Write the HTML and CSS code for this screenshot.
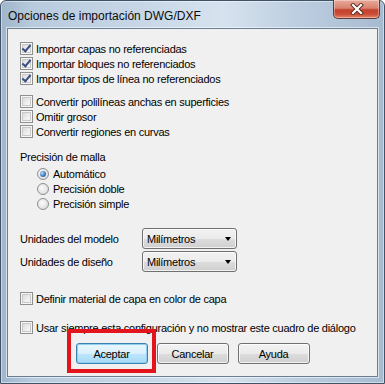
FILE: index.html
```html
<!DOCTYPE html>
<html>
<head>
  <meta charset="UTF-8">
  <title>Opciones de importación DWG/DXF</title>
  <link rel="stylesheet" href="styles.css">
</head>
<body>
  <div class="window">
    <div class="titlebar">
      <span class="title">Opciones de importación DWG/DXF</span>
      <div class="close">
        <svg width="14" height="12" viewBox="0 0 14 12">
          <path d="M3 2 L11 10 M11 2 L3 10" stroke="#5a2a22" stroke-width="4" stroke-linecap="square"/>
          <path d="M3 2 L11 10 M11 2 L3 10" stroke="#ffffff" stroke-width="2.2" stroke-linecap="square"/>
        </svg>
      </div>
    </div>

    <div class="content">
      <div class="group">
        <label class="row"><span class="box checked"></span>Importar capas no referenciadas</label>
        <label class="row"><span class="box checked"></span>Importar bloques no referenciados</label>
        <label class="row"><span class="box checked"></span>Importar tipos de línea no referenciados</label>
      </div>

      <div class="group group-2">
        <label class="row"><span class="box"></span>Convertir polilíneas anchas en superficies</label>
        <label class="row"><span class="box"></span>Omitir grosor</label>
        <label class="row"><span class="box"></span>Convertir regiones en curvas</label>
      </div>

      <div class="row caption">Precisión de malla</div>
      <div class="group radios">
        <label class="row"><span class="radio selected"></span>Automático</label>
        <label class="row"><span class="radio"></span>Precisión doble</label>
        <label class="row"><span class="radio"></span>Precisión simple</label>
      </div>

      <div class="units">
        <div class="unit-row">
          <span class="unit-label">Unidades del modelo</span>
          <div class="select">Milímetros<span class="arrow"></span></div>
        </div>
        <div class="unit-row">
          <span class="unit-label">Unidades de diseño</span>
          <div class="select">Milímetros<span class="arrow"></span></div>
        </div>
      </div>

      <label class="row single"><span class="box"></span>Definir material de capa en color de capa</label>
      <label class="row always"><span class="box"></span>Usar siempre esta configuración y no mostrar este cuadro de diálogo</label>

      <div class="buttons">
        <div class="highlight-wrap">
          <div class="btn default">Aceptar</div>
          <div class="highlight"></div>
        </div>
        <div class="btn">Cancelar</div>
        <div class="btn">Ayuda</div>
      </div>
    </div>
  </div>
</body>
</html>
```

FILE: styles.css
```css
* {
  box-sizing: border-box;
}

body {
  margin: 0;
  font-family: "Liberation Sans", Arial, sans-serif;
  font-size: 11px;
  color: #000;
  background: #fff;
}

.window {
  width: 385px;
  height: 384px;
  border: 1px solid #3f5266;
  border-radius: 6px 6px 0 0;
  background: linear-gradient(90deg, #9fb5cb 0%, #b8cbde 8%, #c6d6e6 35%, #d6e2ee 58%, #bccde0 78%, #a7bbd0 100%);
  box-shadow: inset 0 0 0 1px rgba(255, 255, 255, 0.45);
  display: flex;
  flex-direction: column;
}

.titlebar {
  height: 27px;
  display: flex;
  justify-content: space-between;
  align-items: flex-start;
  padding-left: 7px;
}

.title {
  font-size: 12px;
  padding-top: 8px;
  color: #0c0c0c;
}

.close {
  width: 47px;
  height: 19px;
  margin-top: -1px;
  margin-right: 4px;
  border: 1px solid #5f3a37;
  border-top: none;
  border-radius: 0 0 5px 5px;
  background: linear-gradient(180deg, #e9a99a 0%, #d9836f 45%, #c2402d 55%, #cc4f38 80%, #e4866a 100%);
  box-shadow: inset 0 0 0 1px rgba(255, 255, 255, 0.35);
  display: flex;
  align-items: center;
  justify-content: center;
}

.content {
  flex: 1;
  margin: 0 6px 6px;
  border: 1px solid #6b7f94;
  box-shadow: 0 0 0 1px rgba(255, 255, 255, 0.55);
  background: #f0f0f0;
  padding: 12px 0 0 12px;
  letter-spacing: -0.25px;
  display: flex;
  flex-direction: column;
}

.row {
  display: flex;
  align-items: center;
  height: 15px;
  white-space: nowrap;
}

.group-2 {
  margin-top: 8px;
}

.caption {
  margin-top: 10px;
}

.radios {
  margin-top: 2px;
  margin-left: 17px;
}

.box {
  width: 13px;
  height: 13px;
  margin-right: 3px;
  border: 1px solid #8e8f8f;
  background: linear-gradient(135deg, #d3d3d3 0%, #f0f0f0 60%, #fbfbfb 100%);
  box-shadow: inset 0 0 0 1px #f6f6f6, inset 0 0 0 2px #c9c9c9;
  position: relative;
}

.box.checked::after {
  content: "";
  position: absolute;
  left: 3px;
  top: 0px;
  width: 3px;
  height: 7px;
  border: solid #3a4f84;
  border-width: 0 2px 2px 0;
  transform: rotate(40deg);
}

.radio {
  width: 12px;
  height: 12px;
  margin-right: 4px;
  border-radius: 50%;
  border: 1px solid #8e8f8f;
  background: radial-gradient(circle at 40% 40%, #fbfbfb 0%, #e4e4e4 60%, #cfcfcf 100%);
  position: relative;
}

.radio.selected::after {
  content: "";
  position: absolute;
  left: 2px;
  top: 2px;
  width: 6px;
  height: 6px;
  border-radius: 50%;
  background: radial-gradient(circle at 35% 35%, #b8dcf6 0%, #3d7bc0 55%, #1c4f8e 100%);
}

.units {
  margin-top: 17px;
  display: flex;
  flex-direction: column;
  gap: 2px;
}

.unit-row {
  display: flex;
  align-items: center;
  height: 21px;
}

.unit-label {
  width: 122px;
}

.select {
  width: 95px;
  height: 21px;
  border: 1px solid #707070;
  border-radius: 3px;
  background: linear-gradient(180deg, #f2f2f2 0%, #ebebeb 50%, #dddddd 51%, #cfcfcf 100%);
  box-shadow: inset 0 0 0 1px rgba(255, 255, 255, 0.7);
  padding-left: 4px;
  display: flex;
  align-items: center;
  justify-content: space-between;
}

.arrow {
  width: 0;
  height: 0;
  margin-right: 5px;
  border-left: 3.5px solid transparent;
  border-right: 3.5px solid transparent;
  border-top: 4px solid #000;
}

.single {
  margin-top: 19px;
}

.always {
  margin-top: 14px;
}

.buttons {
  margin-top: 8px;
  margin-left: -12px;
  display: flex;
  justify-content: center;
  gap: 9px;
}

.highlight-wrap {
  position: relative;
}

.btn {
  width: 72px;
  height: 21px;
  border: 1px solid #707070;
  border-radius: 3px;
  background: linear-gradient(180deg, #f2f2f2 0%, #ebebeb 50%, #dddddd 51%, #cfcfcf 100%);
  box-shadow: inset 0 0 0 1px rgba(255, 255, 255, 0.75);
  display: flex;
  align-items: center;
  justify-content: center;
}

.btn.default {
  border-color: #3c7fb1;
  background: linear-gradient(180deg, #eaf6fd 0%, #d9f0fc 50%, #bee6fd 51%, #a7d9f5 100%);
  box-shadow: inset 0 0 0 1px #8fd0f2;
}

.highlight {
  position: absolute;
  left: -9px;
  right: -8px;
  top: -14px;
  bottom: -9px;
  border: 4px solid #e3141c;
}
```
